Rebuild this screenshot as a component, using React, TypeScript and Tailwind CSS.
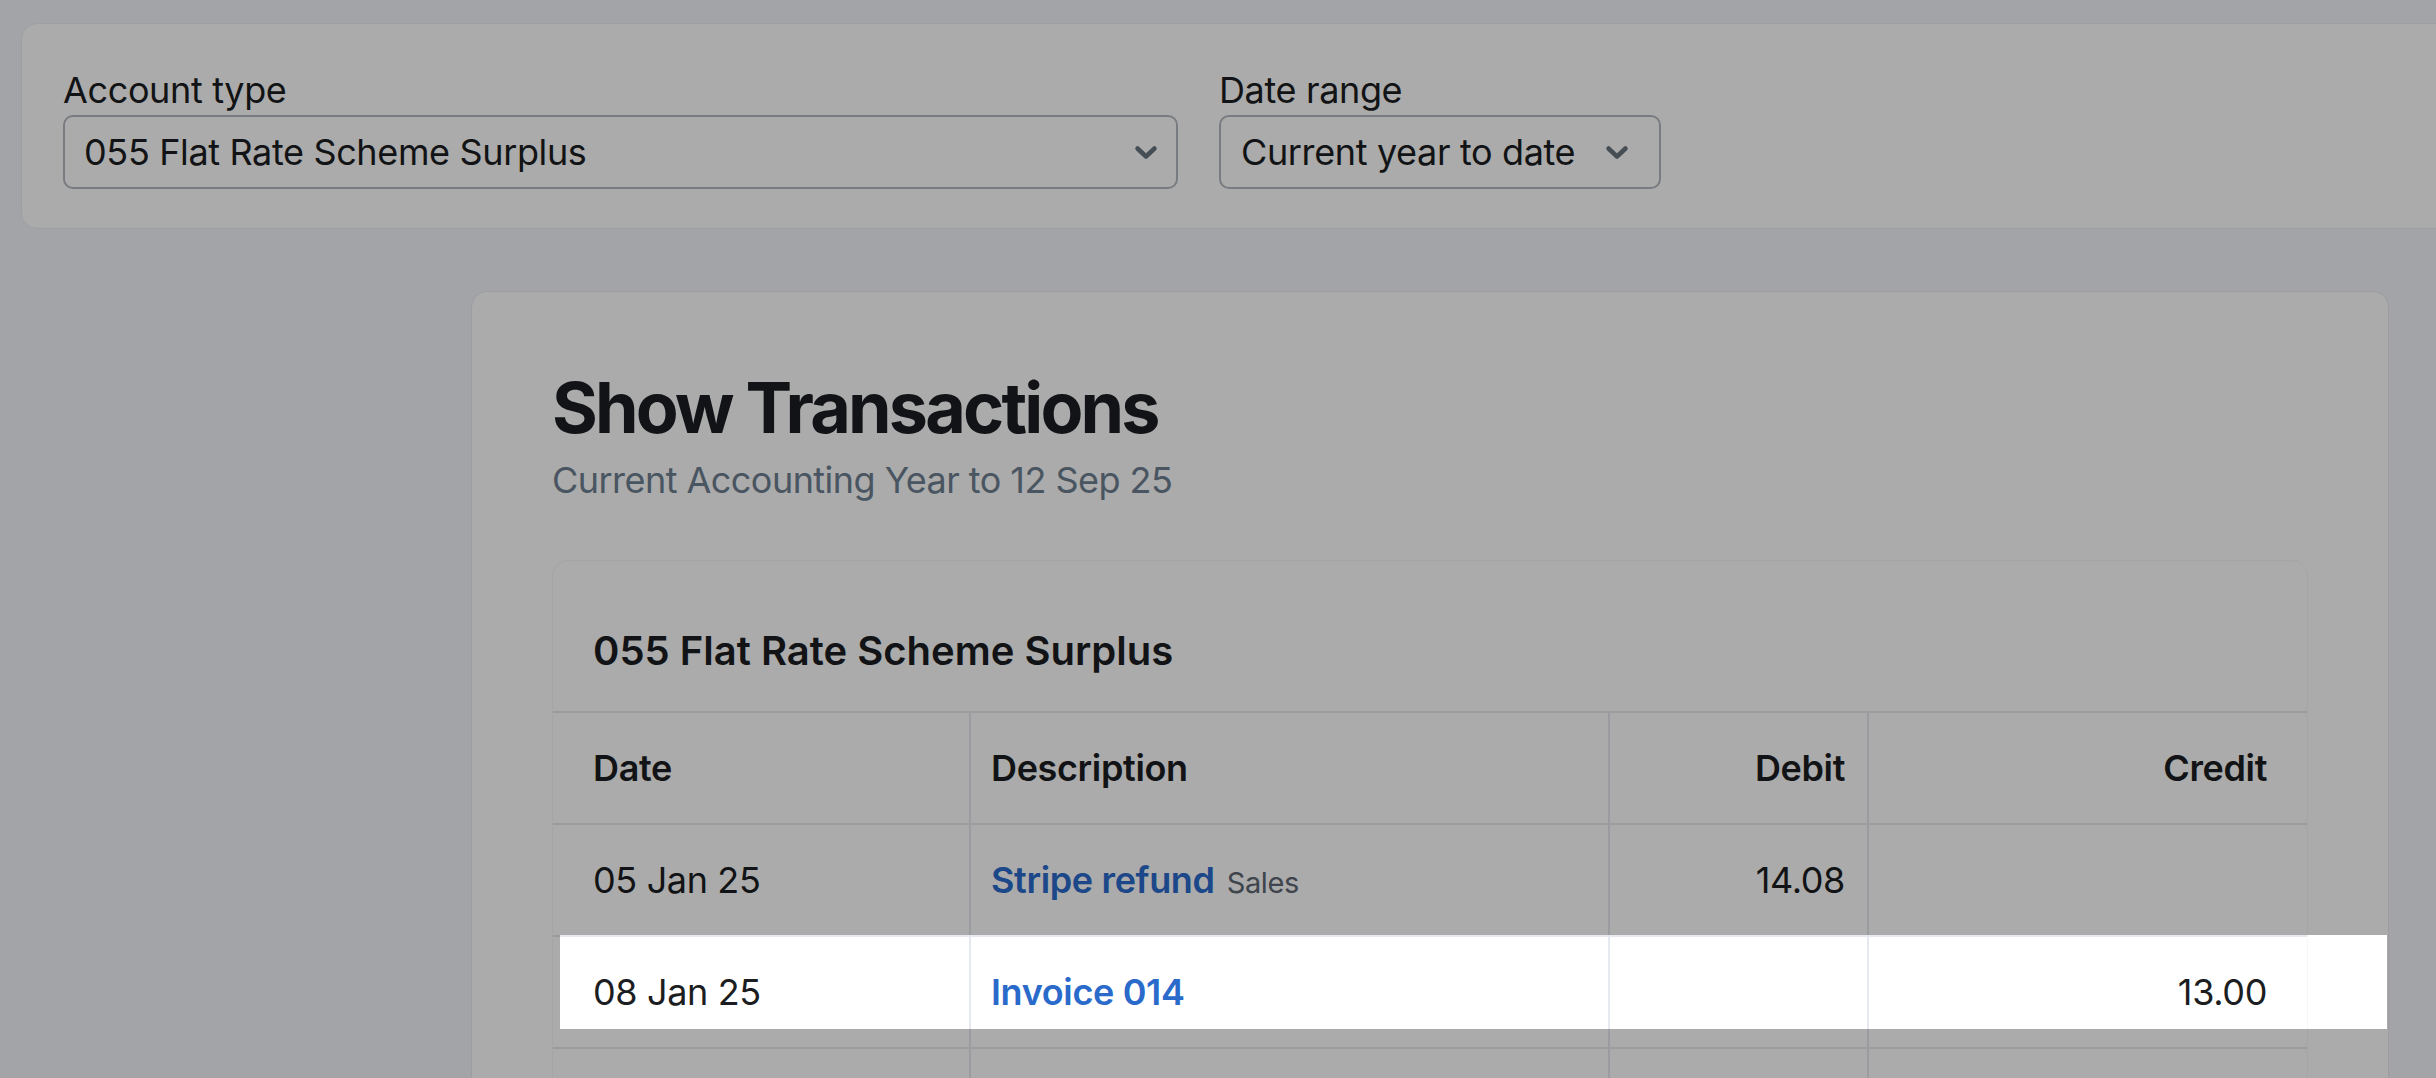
import type { ReactNode } from 'react';

type Txn = {
  date: string;
  label: string;
  source?: string;
  debit?: string;
  credit?: string;
  focused?: boolean;
};

const txns: Txn[] = [
  { date: '05 Jan 25', label: 'Stripe refund', source: 'Sales', debit: '14.08' },
  { date: '08 Jan 25', label: 'Invoice 014', credit: '13.00', focused: true },
];

function Chevron(): React.JSX.Element {
  return (
    <svg
      width="24"
      height="15"
      viewBox="0 0 24 15"
      fill="none"
      stroke="#67737f"
      strokeWidth={4.5}
      strokeLinecap="round"
      strokeLinejoin="round"
      className="shrink-0"
    >
      <path d="M3.5 3.5l8.5 8 8.5-8" />
    </svg>
  );
}

function Field({ label, children }: { label: string; children: ReactNode }): React.JSX.Element {
  return (
    <div className="flex flex-col">
      <span className="text-[36px] leading-[44px] tracking-[-0.01em] text-[#1b1d21]">{label}</span>
      {children}
    </div>
  );
}

function Cell({
  children,
  className = '',
}: {
  children?: ReactNode;
  className?: string;
}): React.JSX.Element {
  return (
    <div className={`h-[110px] py-[33px] text-[36px] leading-[44px] tracking-[-0.01em] ${className}`}>
      {children}
    </div>
  );
}

const row = 'relative grid grid-cols-[416px_639px_259px_1fr] border-t-2 border-[#e6e9ef]';
const divider = 'border-l-2 border-[#e6e9ef]';

export default function App(): React.JSX.Element {
  return (
    <div className="relative h-screen overflow-hidden bg-[#f4f5fa] font-['Inter','Liberation_Sans',sans-serif] text-[#1b1d21]">
      {/* Filters */}
      <div className="ml-[21px] mt-[23px] w-[2460px] rounded-2xl border border-[#eceef2] bg-white pb-[39px] pl-[41px] pt-[44px]">
        <div className="flex items-end gap-[41px]">
          <Field label="Account type">
            <button className="mt-[3px] flex h-[74px] w-[1115px] items-center justify-between rounded-[10px] border-2 border-[#b3b9bf] bg-white pl-[19px] pr-[18px] text-[36px] tracking-[-0.01em] text-[#1b1d21]">
              <span>055 Flat Rate Scheme Surplus</span>
              <Chevron />
            </button>
          </Field>
          <Field label="Date range">
            <button className="mt-[3px] flex h-[74px] w-[442px] items-center justify-between rounded-[10px] border-2 border-[#b3b9bf] bg-white pl-[20px] pr-[30px] text-[36px] tracking-[-0.01em] text-[#1b1d21]">
              <span>Current year to date</span>
              <Chevron />
            </button>
          </Field>
        </div>
      </div>

      {/* Report */}
      <div className="ml-[471px] mr-[47px] mt-[62px] rounded-2xl border border-[#eaebf0] bg-white px-20 pt-[73px]">
        <h1 className="text-[70px] font-bold leading-[85px] tracking-[-0.04em] text-[#1b1d21]">
          Show Transactions
        </h1>
        <p className="mt-[8px] text-[36px] leading-[44px] tracking-[-0.015em] text-[#6e7f91]">
          Current Accounting Year to 12 Sep 25
        </p>

        <div className="mt-[58px] rounded-2xl border border-[#f6f7f9]">
          <h2 className="pb-[36px] pl-[40px] pt-[66px] text-[40px] font-semibold leading-[48px]">
            055 Flat Rate Scheme Surplus
          </h2>

          <div className={`${row} font-semibold`}>
            <Cell className="pl-[40px]">Date</Cell>
            <Cell className={`${divider} pl-[20px]`}>Description</Cell>
            <Cell className={`${divider} pr-[22px] text-right`}>Debit</Cell>
            <Cell className={`${divider} pr-[40px] text-right`}>Credit</Cell>
          </div>

          {txns.map((t) => (
            <div key={t.date + t.label} className={row}>
              <Cell className="pl-[40px]">{t.date}</Cell>
              <Cell className={`${divider} pl-[20px]`}>
                <a href="#" className="font-semibold tracking-[-0.01em] text-[#2a6acb]">
                  {t.label}
                </a>
                {t.source && (
                  <span className="ml-[12px] text-[29px] leading-none text-[#5e6773]">{t.source}</span>
                )}
              </Cell>
              <Cell className={`${divider} pr-[22px] text-right`}>{t.debit}</Cell>
              <Cell className={`${divider} pr-[40px] text-right`}>{t.credit}</Cell>

              {/* tour spotlight: dims the page around this row */}
              {t.focused && (
                <div className="pointer-events-none absolute left-[7px] top-[-2px] z-10 h-[94px] w-[1827px] shadow-[0_0_0_6000px_rgba(0,0,0,0.33)]" />
              )}
            </div>
          ))}

          <div className={row}>
            <Cell />
            <Cell className={divider} />
            <Cell className={divider} />
            <Cell className={divider} />
          </div>
        </div>
      </div>
    </div>
  );
}
